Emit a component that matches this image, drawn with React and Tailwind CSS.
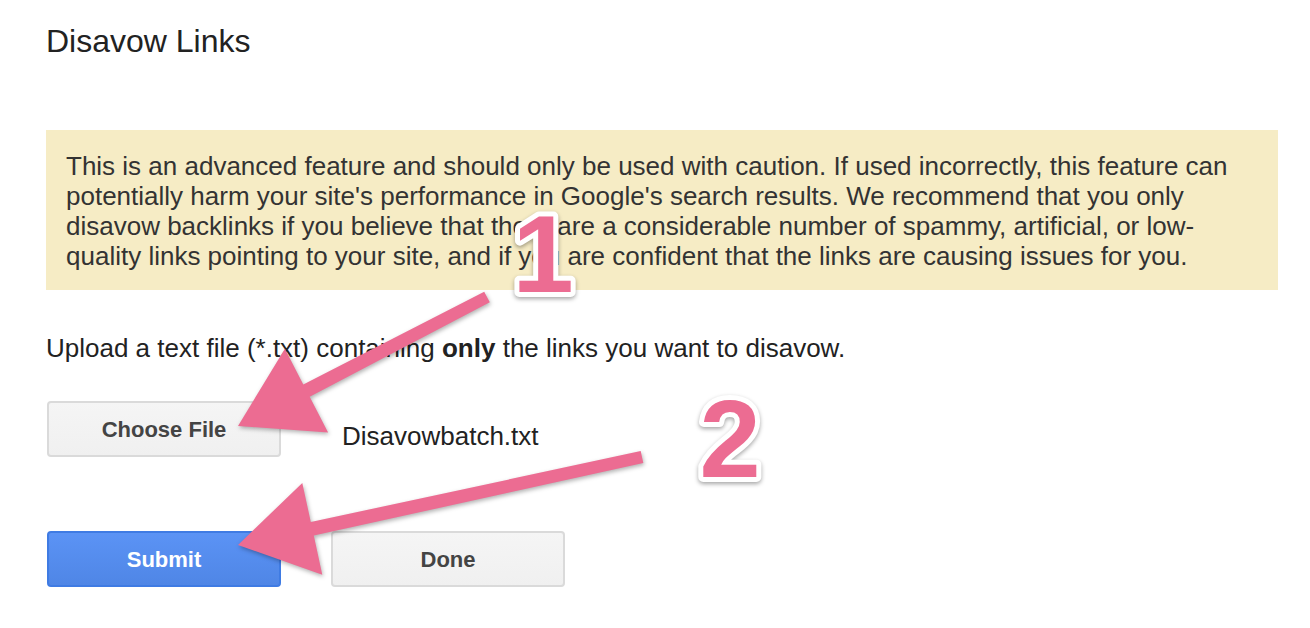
export default function App() {
  return (
    <div className="relative min-h-screen w-[1310px] h-[628px] overflow-hidden bg-white font-['Liberation_Sans',Arial,sans-serif]">
      <div className="pl-[46px] pr-[32px] pt-[23px]">
        <h1 className="text-[32px] leading-[36px] text-[#222] font-normal">Disavow Links</h1>

        {/* Warning */}
        <div className="mt-[71px] bg-[#f6ecc5] pl-[20px] pr-[20px] pt-[21px] pb-[19px]">
          <p className="text-[26px] leading-[30px] text-[#333]">
            This is an advanced feature and should only be used with caution. If used incorrectly, this feature can potentially harm your site's performance in Google's search results. We recommend that you only disavow backlinks if you believe that there are a considerable number of spammy, artificial, or low-quality links pointing to your site, and if you are confident that the links are causing issues for you.
          </p>
        </div>

        <p className="mt-[43px] text-[26px] leading-[30px] text-[#222]">
          Upload a text file (*.txt) containing <b className="font-bold">only</b> the links you want to disavow.
        </p>

        <div className="mt-[38px] flex items-center">
          <button className="ml-[1px] w-[234px] h-[56px] rounded-[4px] border-2 border-[#dadada] bg-gradient-to-b from-[#f5f5f5] to-[#f0f0f0] text-[22px] font-bold text-[#444]">
            Choose File
          </button>
          <span className="ml-[61px] pt-[14px] text-[26px] leading-[30px] text-[#222]">Disavowbatch.txt</span>
        </div>

        <div className="mt-[74px] flex items-center gap-[50px]">
          <button className="ml-[1px] w-[234px] h-[56px] rounded-[4px] border-2 border-[#3f7be3] bg-gradient-to-b from-[#5b93f5] to-[#4f86e6] text-[22px] font-bold text-white">
            Submit
          </button>
          <button className="w-[234px] h-[56px] rounded-[4px] border-2 border-[#dadada] bg-gradient-to-b from-[#f5f5f5] to-[#f0f0f0] text-[22px] font-bold text-[#444]">
            Done
          </button>
        </div>
      </div>

      {/* Annotations */}
      <svg className="absolute inset-0 pointer-events-none" width="1310" height="628" viewBox="0 0 1310 628">
        <g fill="#ec6c92" className="[filter:drop-shadow(1px_2px_2px_rgba(0,0,0,0.3))]">
          <polygon points="238,426 328.1,432.4 309.7,396.8 489.8,302.3 484.2,291.7 303.3,384.4 284.9,348.8" />
          <polygon points="238,545 322.3,574.7 313.8,535.6 643.3,462.9 640.7,451.1 310.8,522 302.3,482.9" />
        </g>
        <g
          fill="#ec6c92"
          stroke="#fff"
          strokeWidth="10"
          strokeLinejoin="round"
          paintOrder="stroke"
          fontFamily="'Liberation Sans', Arial, sans-serif"
          fontWeight="700"
          fontSize="110"
          textAnchor="middle"
          className="[filter:drop-shadow(0_2px_2px_rgba(0,0,0,0.35))]"
        >
          <text x="543" y="292">1</text>
          <text x="730" y="477">2</text>
        </g>
      </svg>
    </div>
  );
}
